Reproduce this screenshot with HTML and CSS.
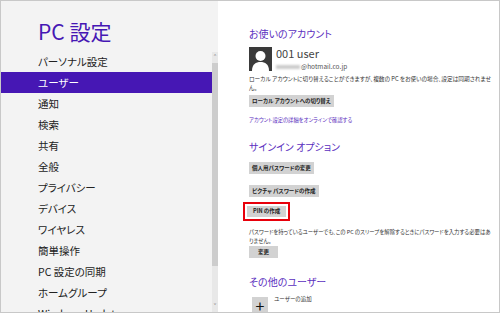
FILE: index.html
```html
<!DOCTYPE html>
<html>
<head>
    <title>PC 設定</title>
    <meta charset="UTF-8">
    <link rel="stylesheet" href="styles.css">
</head>
<body>
<div class="frame">
    <div class="side">
        <div class="nav">
            <h1 class="title">PC 設定</h1>
            <div class="item">パーソナル設定</div>
            <div class="item active">ユーザー</div>
            <div class="item">通知</div>
            <div class="item">検索</div>
            <div class="item">共有</div>
            <div class="item">全般</div>
            <div class="item">プライバシー</div>
            <div class="item">デバイス</div>
            <div class="item">ワイヤレス</div>
            <div class="item">簡単操作</div>
            <div class="item">PC 設定の同期</div>
            <div class="item">ホームグループ</div>
            <div class="item">Windows Update</div>
        </div>
        <div class="scrollbar">
            <div class="arrow">&#x02C4;</div>
            <div class="thumb"></div>
            <div class="track"></div>
            <div class="arrow">&#x02C5;</div>
        </div>
    </div>

    <div class="main">
        <h2 class="heading first">お使いのアカウント</h2>
        <div class="account">
            <svg class="avatar" width="23" height="24" viewBox="0 0 23 24">
                <rect width="23" height="24" fill="#3a3a3a"/>
                <circle cx="11.5" cy="9" r="5" fill="#fff"/>
                <path d="M3 24 C3 17 7 15 11.5 15 C16 15 20 17 20 24 Z" fill="#fff"/>
            </svg>
            <div>
                <div class="user-name">001 user</div>
                <div class="user-mail"><span class="blur"></span>@hotmail.co.jp</div>
            </div>
        </div>
        <p class="note">ローカル アカウントに切り替えることができますが、複数の PC をお使いの場合、設定は同期されませ<br>ん。</p>
        <div class="btn">ローカル アカウントへの切り替え</div>
        <div class="link">アカウント設定の詳細をオンラインで確認する</div>

        <h2 class="heading">サインイン オプション</h2>
        <div class="btn gap">個人用パスワードの変更</div>
        <div class="btn gap2">ピクチャ パスワードの作成</div>
        <div class="marked">
            <div class="btn">PIN の作成</div>
        </div>
        <p class="note second">パスワードを持っているユーザーでも、この PC のスリープを解除するときにパスワードを入力する必要はあ<br>りません。</p>
        <div class="btn small">変更</div>

        <h2 class="heading third">その他のユーザー</h2>
        <div class="add-row">
            <div class="plus">+</div>
            <div class="add-label">ユーザーの追加</div>
        </div>
    </div>
</div>
</body>
</html>
```

FILE: styles.css
```css
body {
    margin: 0;
    font-family: "Noto Sans CJK JP", "Noto Sans", sans-serif;
    font-feature-settings: "palt" 1;
    color: #222;
}

.frame {
    box-sizing: border-box;
    width: 500px;
    height: 313px;
    border: 1px solid #c8c8c8;
    display: flex;
    overflow: hidden;
}

.side {
    width: 217px;
    background: #f3f3f3;
    display: flex;
}

.nav {
    width: 211px;
}

.title {
    margin: 0 0 6px;
    padding: 16px 0 0 37px;
    font-size: 21px;
    line-height: 28px;
    font-weight: normal;
    color: #4617b4;
}

.item {
    height: 21px;
    line-height: 21px;
    padding-left: 37px;
    font-size: 10.5px;
    white-space: nowrap;
}

.item.active {
    background: #4617b4;
    color: #fff;
}

.scrollbar {
    width: 6px;
    margin-top: 51px;
    display: flex;
    flex-direction: column;
    background: #e8e8e8;
}

.arrow {
    height: 11px;
    font-size: 9px;
    line-height: 11px;
    text-align: center;
    color: #777;
}

.thumb {
    height: 203px;
    background: #cdcdcd;
}

.track {
    flex: 1;
}

.main {
    flex: 1;
    background: #fff;
    padding-left: 31px;
    padding-right: 14px;
}

.heading {
    margin: 15px 0 0;
    font-size: 10px;
    line-height: 14px;
    font-weight: normal;
    color: #5b2fc0;
}

.heading.first {
    margin-top: 26px;
}

.heading.third {
    margin-top: 17px;
}

.account {
    display: flex;
    margin-top: 6px;
}

.avatar {
    display: block;
    margin-right: 4px;
}

.user-name {
    font-size: 11px;
    line-height: 12px;
    color: #444;
}

.user-mail {
    margin-top: 3px;
    font-size: 6.5px;
    line-height: 9px;
    color: #555;
}

.blur {
    display: inline-block;
    width: 24px;
    height: 4px;
    margin-right: 1px;
    background: #ccc;
    filter: blur(1px);
}

.note {
    margin: 4px 0 0;
    font-size: 5.7px;
    line-height: 8.5px;
    white-space: nowrap;
    color: #333;
}

.note.second {
    margin-top: 7px;
    font-size: 5.4px;
}

.btn {
    width: fit-content;
    margin-top: 3px;
    height: 12px;
    line-height: 12px;
    padding: 0 3px;
    background: #d2d2d2;
    font-size: 5.5px;
    font-weight: bold;
    color: #222;
}

.btn.gap {
    margin-top: 8px;
}

.btn.gap2 {
    margin-top: 11px;
}

.btn.small {
    margin-top: 1px;
    padding: 0 9px;
}

.link {
    margin-top: 9px;
    font-size: 5.3px;
    line-height: 9px;
    color: #5b2fc0;
}

.marked {
    width: fit-content;
    margin: 5px 0 0 -6px;
    border: 2px solid #e8000b;
    padding: 2px;
}

.marked .btn {
    margin-top: 0;
    padding: 0 6px;
    height: 11px;
    line-height: 11px;
}

.add-row {
    display: flex;
    margin-top: 6px;
    margin-left: 3px;
}

.plus {
    width: 16px;
    height: 16px;
    margin-top: 2px;
    background: #d2d2d2;
    font-size: 16px;
    line-height: 17px;
    text-align: center;
    color: #111;
}

.add-label {
    margin-left: 6px;
    font-size: 5.5px;
    line-height: 8px;
    color: #333;
}
```
